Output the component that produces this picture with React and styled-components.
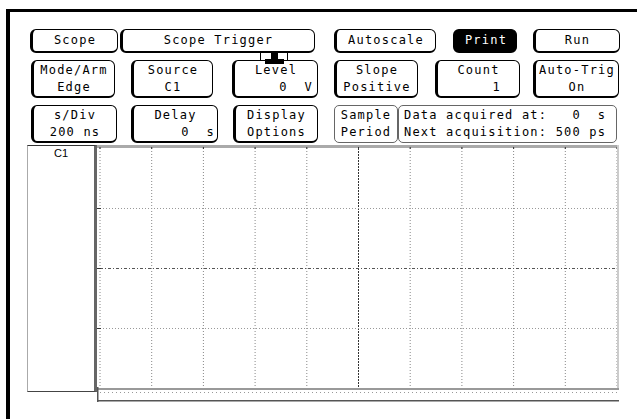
import React from 'react';
import styled, { createGlobalStyle } from 'styled-components';

const GlobalStyle = createGlobalStyle`
  html, body {
    margin: 0;
    padding: 0;
    background: #fff;
    overflow: hidden;
  }
  body {
    font-family: "DejaVu Sans Mono", "Liberation Mono", monospace;
    color: #000;
  }
`;

const Frame = styled.div`
  margin: 9px 0 0 6px;
  height: 410px;
  box-sizing: border-box;
  border-top: 3px solid #000;
  border-left: 4px solid #000;
  padding-top: 17px;
`;

const Row = styled.div`
  display: flex;
  align-items: flex-start;
  margin-bottom: ${(p) => p.$mb}px;
`;

const Key = styled.div`
  position: relative;
  box-sizing: border-box;
  width: ${(p) => p.$w}px;
  height: ${(p) => (p.$tall ? 38 : 24)}px;
  margin-left: ${(p) => p.$gap}px;
  border: 1px solid #000;
  border-left-width: 3px;
  border-bottom-width: 2px;
  border-radius: 6px;
  background: ${(p) => (p.$on ? '#000' : '#fff')};
  color: ${(p) => (p.$on ? '#fff' : '#000')};
  font-size: 12px;
  letter-spacing: 1.2px;
  white-space: pre;
  display: flex;
  flex-direction: column;
  justify-content: ${(p) => (p.$tall ? 'flex-start' : 'center')};
  padding-top: ${(p) => (p.$tall ? 1 : 0)}px;
`;

const Field = styled(Key)`
  border: 1px solid #666;
  border-radius: 5px;
  height: 38px;
`;

const Line = styled.div`
  line-height: 17px;
  text-align: ${(p) => p.$align || 'center'};
  padding-right: ${(p) => p.$pr || 0}px;
  padding-left: ${(p) => p.$pl || 0}px;
`;

const Connector = styled.svg`
  position: absolute;
  left: 25px;
  top: -9px;
`;

const ScopeArea = styled.div`
  display: flex;
  align-items: flex-start;
  margin: 2px 0 0 17px;
`;

const ChannelLabel = styled.div`
  box-sizing: border-box;
  width: 70px;
  height: 247px;
  border-top: 1px solid #333;
  border-left: 1px solid #aaa;
  border-bottom: 1px solid #444;
  border-right: 3px solid #666;
  font-family: "Liberation Sans", Arial, sans-serif;
  font-size: 11px;
  text-align: center;
  line-height: 13px;
  padding-top: 1px;
`;

const GRID_W = 523;
const GRID_H = 257;
const DIV_X = 51.7;

function Graticule() {
  const xs = Array.from({ length: 11 }, (_, i) => 3 + i * DIV_X);
  const ys = [63, 123, 183];
  return (
    <svg width={GRID_W} height={GRID_H} style={{ display: 'block' }}>
      <rect x="0" y="0" width={GRID_W - 2} height="3" fill="#aaa" />
      {xs.map((x, i) => (
        <line
          key={'v' + i}
          x1={x}
          x2={x}
          y1="3"
          y2="243"
          stroke={i === 5 ? '#333' : '#888'}
          strokeDasharray={i === 5 ? '2 1' : '1 2'}
        />
      ))}
      {xs.map((x, i) => (
        <rect key={'t' + i} x={x - 0.5} y="2" width="1" height="2" fill="#333" />
      ))}
      {ys.map((y) => (
        <line
          key={'h' + y}
          x1="3"
          x2={GRID_W - 3}
          y1={y + 0.5}
          y2={y + 0.5}
          stroke={y === 123 ? '#555' : '#999'}
          strokeDasharray={y === 123 ? '3 2 1 2' : '1 2'}
        />
      ))}
      {ys.map((y) => (
        <rect key={'l' + y} x="0" y={y} width="4" height="1" fill="#333" />
      ))}
      <rect x={GRID_W - 3} y="0" width="2" height="245" fill="#ccc" />
      <rect x="0" y="243" width={GRID_W - 1} height="2" fill="#999" />
      <line x1="3" x2={GRID_W - 3} y1="247.5" y2="247.5" stroke="#999" strokeDasharray="1 3" />
      <rect x="0" y="255" width={GRID_W - 1} height="1.5" fill="#555" />
      <rect x="0" y="242" width="1.5" height="15" fill="#555" />
    </svg>
  );
}

export default function App() {
  return (
    <>
      <GlobalStyle />
      <Frame>
        <Row $mb={7}>
          <Key $w={88} $gap={20}><Line>Scope</Line></Key>
          <Key $w={195} $gap={2}><Line>Scope Trigger</Line></Key>
          <Key $w={102} $gap={19}><Line>Autoscale</Line></Key>
          <Key $w={64} $gap={17} $on><Line>Print</Line></Key>
          <Key $w={87} $gap={16}><Line>Run</Line></Key>
        </Row>
        <Row $mb={7}>
          <Key $tall $w={84} $gap={21}>
            <Line>Mode/Arm</Line>
            <Line>Edge</Line>
          </Key>
          <Key $tall $w={82} $gap={16}>
            <Line>Source</Line>
            <Line>C1</Line>
          </Key>
          <Key $tall $w={86} $gap={19}>
            <Connector width="29" height="13">
              <line x1="0.5" x2="0.5" y1="0" y2="9" stroke="#000" />
              <line x1="27.5" x2="27.5" y1="0" y2="9" stroke="#000" />
              <rect x="11" y="1" width="7" height="7" fill="#000" />
              <rect x="5" y="7" width="19" height="5" fill="#000" />
            </Connector>
            <Line>Level</Line>
            <Line $align="right" $pr={4}>0  V</Line>
          </Key>
          <Key $tall $w={84} $gap={16}>
            <Line>Slope</Line>
            <Line>Positive</Line>
          </Key>
          <Key $tall $w={85} $gap={17}>
            <Line>Count</Line>
            <Line $align="right" $pr={18}>1</Line>
          </Key>
          <Key $tall $w={86} $gap={13}>
            <Line>Auto-Trig</Line>
            <Line>On</Line>
          </Key>
        </Row>
        <Row $mb={2}>
          <Key $tall $w={86} $gap={21}>
            <Line>s/Div</Line>
            <Line>200 ns</Line>
          </Key>
          <Key $tall $w={87} $gap={14}>
            <Line>Delay</Line>
            <Line $align="right" $pr={2}>0  s</Line>
          </Key>
          <Key $tall $w={85} $gap={15}>
            <Line>Display</Line>
            <Line>Options</Line>
          </Key>
          <Field $tall $w={64} $gap={16}>
            <Line>Sample</Line>
            <Line>Period</Line>
          </Field>
          <Field $tall $w={219} $gap={0}>
            <Line $align="left" $pl={5}>Data acquired at:   0  s</Line>
            <Line $align="left" $pl={5}>Next acquisition: 500 ps</Line>
          </Field>
        </Row>
        <ScopeArea>
          <ChannelLabel>C1</ChannelLabel>
          <Graticule />
        </ScopeArea>
      </Frame>
    </>
  );
}
